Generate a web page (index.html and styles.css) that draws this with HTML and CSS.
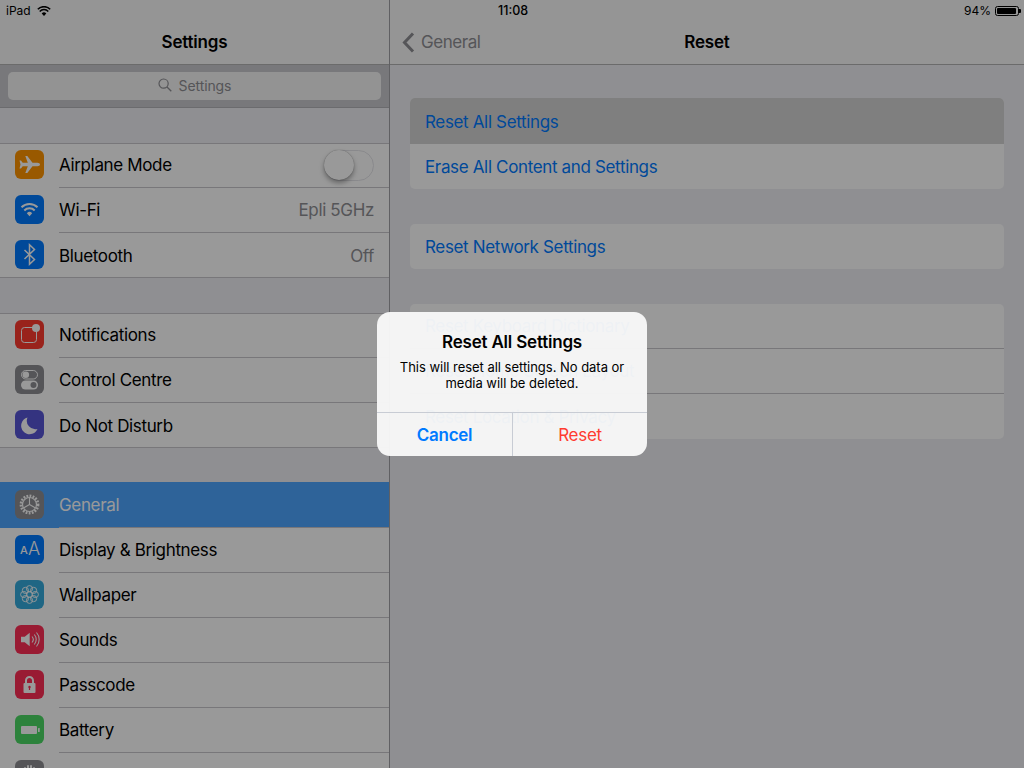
FILE: index.html
```html
<!DOCTYPE html>
<html lang="en">
<head>
<meta charset="utf-8">
<title>Settings - Reset</title>
<link rel="stylesheet" href="styles.css">
</head>
<body>
<div class="screen">
  <aside class="sidebar">
    <div class="nav">
      <div class="status status-left">
        <span>iPad</span>
        <svg class="status-wifi" viewBox="0 0 14 10"><path d="M7 10 4.700 7.400a3.300 3.300 0 0 1 4.600 0Z" fill="#000"/><path d="M2.700 5.400a6 6 0 0 1 8.600 0M.8 3.200a8.800 8.800 0 0 1 12.400 0" fill="none" stroke="#000" stroke-width="1.500"/></svg>
      </div>
      <div class="nav-title">Settings</div>
    </div>
    <div class="search-band">
      <div class="search-field">
        <svg class="search-icon" viewBox="0 0 14 14"><circle cx="5.600" cy="5.600" r="4.600" fill="none" stroke="#8e8e93" stroke-width="1.200"/><path d="m9 9 4.300 4.300" stroke="#8e8e93" stroke-width="1.300"/></svg>
        <span>Settings</span>
      </div>
    </div>

    <div class="group">
      <div class="row">
        <span class="icon orange"><svg viewBox="0 0 29 29"><path d="M25 14.500c0-1-1.200-1.700-2.500-1.700h-5L12.300 6h-2l2.500 6.800H7.700L6 10.500H4.500l1 4-1 4H6l1.700-2.300h5.100L10.300 23h2l5.200-6.800h5c1.300 0 2.500-.7 2.500-1.700Z" fill="#fff"/></svg></span>
        <div class="row-body"><span>Airplane Mode</span><span class="switch"><span class="knob"></span></span></div>
      </div>
      <div class="row">
        <span class="icon blue"><svg viewBox="0 0 29 29"><path d="m14.500 21.200-2.700-3a3.800 3.800 0 0 1 5.400 0Z" fill="#fff"/><path d="M9.300 15.500a7.300 7.300 0 0 1 10.400 0M6.500 12.300a11.300 11.300 0 0 1 16 0" fill="none" stroke="#fff" stroke-width="2"/></svg></span>
        <div class="row-body"><span>Wi-Fi</span><span class="value">Epli 5GHz</span></div>
      </div>
      <div class="row">
        <span class="icon blue"><svg viewBox="0 0 29 29"><path d="m9.500 10 10 9.500-5 4.800V4.700l5 4.800-10 9.500" fill="none" stroke="#fff" stroke-width="1.500"/></svg></span>
        <div class="row-body"><span>Bluetooth</span><span class="value">Off</span></div>
      </div>
    </div>

    <div class="group">
      <div class="row">
        <span class="icon red"><svg viewBox="0 0 29 29"><rect x="6.500" y="7.500" width="15" height="15" rx="3" fill="none" stroke="#fff" stroke-width="1"/><circle cx="21" cy="8" r="4" fill="#fff"/></svg></span>
        <div class="row-body"><span>Notifications</span></div>
      </div>
      <div class="row">
        <span class="icon grey"><svg viewBox="0 0 29 29"><rect x="6.500" y="5.500" width="16" height="8.500" rx="4.250" fill="none" stroke="#fff"/><circle cx="10.800" cy="9.700" r="3.300" fill="#fff"/><rect x="6" y="15.500" width="17" height="9" rx="4.500" fill="#fff"/><circle cx="18.500" cy="20" r="3" fill="#8e8e93"/></svg></span>
        <div class="row-body"><span>Control Centre</span></div>
      </div>
      <div class="row">
        <span class="icon indigo"><svg viewBox="0 0 29 29"><path d="M12.500 7.500a8.500 8.500 0 1 0 10 11.500 8.500 8.500 0 0 1-10-11.500Z" fill="#fff"/></svg></span>
        <div class="row-body"><span>Do Not Disturb</span></div>
      </div>
    </div>

    <div class="group">
      <div class="row selected">
        <span class="icon grey"><svg viewBox="0 0 29 29"><circle cx="14.500" cy="14.500" r="8.600" fill="none" stroke="#fff" stroke-width="2.600" stroke-dasharray="1.800 1.300"/><circle cx="14.500" cy="14.500" r="7" fill="none" stroke="#fff" stroke-width="1.200"/><path d="M14.500 14.500V8M14.500 14.500l5.600 3.200M14.500 14.500l-5.600 3.200" stroke="#fff" stroke-width="1.100"/></svg></span>
        <div class="row-body"><span>General</span></div>
      </div>
      <div class="row">
        <span class="icon blue"><svg viewBox="0 0 29 29"><text class="aa-small" x="5" y="19">A</text><text class="aa-large" x="13" y="20">A</text></svg></span>
        <div class="row-body"><span>Display &amp; Brightness</span></div>
      </div>
      <div class="row">
        <span class="icon teal"><svg viewBox="0 0 29 29"><g fill="none" stroke="#fff" stroke-width=".9"><circle cx="14.500" cy="14.500" r="2.800"/><circle cx="14.500" cy="8.700" r="3.100"/><circle cx="14.500" cy="20.300" r="3.100"/><circle cx="8.700" cy="14.500" r="3.100"/><circle cx="20.300" cy="14.500" r="3.100"/><circle cx="10.400" cy="10.400" r="3.100"/><circle cx="18.600" cy="10.400" r="3.100"/><circle cx="10.400" cy="18.600" r="3.100"/><circle cx="18.600" cy="18.600" r="3.100"/></g></svg></span>
        <div class="row-body"><span>Wallpaper</span></div>
      </div>
      <div class="row">
        <span class="icon crimson"><svg viewBox="0 0 29 29"><path d="M6 11.800h3.700l5-4v13.400l-5-4H6Z" fill="#fff"/><path d="M17 11.500a4.500 4.500 0 0 1 0 6M19.300 9.500a7.500 7.500 0 0 1 0 10M21.500 7.500a10.500 10.500 0 0 1 0 14" fill="none" stroke="#fff" stroke-width="1.100"/></svg></span>
        <div class="row-body"><span>Sounds</span></div>
      </div>
      <div class="row">
        <span class="icon crimson"><svg viewBox="0 0 29 29"><path d="M11 13.500v-3a3.500 3.500 0 0 1 7 0v3" fill="none" stroke="#fff" stroke-width="2"/><rect x="8.500" y="13" width="12" height="10" rx="1" fill="#fff"/><path d="M14.500 16.500v3.500" stroke="#ff2d55" stroke-width="1.200"/><circle cx="14.500" cy="17" r="1.200" fill="#ff2d55"/></svg></span>
        <div class="row-body"><span>Passcode</span></div>
      </div>
      <div class="row">
        <span class="icon green"><svg viewBox="0 0 29 29"><rect x="6" y="11" width="16" height="8" rx="1" fill="#fff"/><rect x="23" y="13" width="1.700" height="4" rx=".6" fill="#fff"/></svg></span>
        <div class="row-body"><span>Battery</span></div>
      </div>
      <div class="row">
        <span class="icon grey"><svg viewBox="0 0 29 29"><path d="M10 8v10M13 6v12M16 6v12M19 8v10" stroke="#fff" stroke-width="2" stroke-linecap="round"/></svg></span>
        <div class="row-body"></div>
      </div>
    </div>
  </aside>

  <main class="detail">
    <div class="nav">
      <div class="status status-detail">
        <span class="time">11:08</span>
        <span class="battery-wrap"><span>94%</span><span class="battery"><span class="battery-fill"></span></span></span>
      </div>
      <div class="nav-row">
        <div class="back">
          <svg class="chevron" viewBox="0 0 13 21"><path d="M11 1.500 2.500 10.500l8.500 9" fill="none" stroke="#8e8e93" stroke-width="3"/></svg>
          <span>General</span>
        </div>
        <div class="nav-title">Reset</div>
      </div>
    </div>
    <div class="detail-body">
      <div class="card">
        <div class="card-row pressed">Reset All Settings</div>
        <div class="card-row">Erase All Content and Settings</div>
      </div>
      <div class="card">
        <div class="card-row">Reset Network Settings</div>
      </div>
      <div class="card">
        <div class="card-row">Reset Keyboard Dictionary</div>
        <div class="card-row">Reset Home Screen Layout</div>
        <div class="card-row">Reset Location &amp; Privacy</div>
      </div>
    </div>
  </main>

  <div class="dim">
    <div class="alert">
      <div class="alert-text">
        <div class="alert-title">Reset All Settings</div>
        <div class="alert-message">This will reset all settings. No data or media will be deleted.</div>
      </div>
      <div class="alert-buttons">
        <div class="alert-button cancel">Cancel</div>
        <div class="alert-button destructive">Reset</div>
      </div>
    </div>
  </div>
</div>
</body>
</html>
```

FILE: styles.css
```css
* { box-sizing: border-box; }
html, body { margin: 0; padding: 0; }
body { font-family: Inter, "Liberation Sans", sans-serif; color: #000; }
.screen { position: relative; display: flex; width: 1024px; height: 768px; overflow: hidden; background: #efeff4; }
.sidebar { width: 390px; height: 768px; overflow: hidden; border-right: 1px solid #a0a0a5; flex: none; }
.detail { flex: 1; display: flex; flex-direction: column; }

.nav { height: 65px; background: #f8f8f8; border-bottom: 1px solid #b2b2b2; display: flex; flex-direction: column; }
.status { height: 20px; padding-top: 1px; font-size: 12px; display: flex; align-items: center; flex: none; }
.status-left { padding-left: 6px; gap: 6px; }
.status-wifi { width: 14px; height: 10px; }
.nav-title { font-size: 17px; font-weight: 600; letter-spacing: -.2px; text-align: center; line-height: 44px; }
.status-detail { position: relative; justify-content: flex-end; padding-right: 5px; }
.time { position: absolute; left: 108px; font-weight: 500; font-size: 12.500px; }
.battery-wrap { display: flex; align-items: center; gap: 4px; }
.battery { width: 24px; height: 10px; border: 1px solid #000; border-radius: 2.500px; padding: 1px; position: relative; }
.battery::after { content: ""; position: absolute; left: 23px; top: 2px; width: 2px; height: 4px; background: #000; border-radius: 0 1px 1px 0; }
.battery-fill { display: block; width: 94%; height: 100%; background: #000; border-radius: 1px; }
.nav-row { position: relative; height: 44px; }
.back { position: absolute; left: 12px; top: 0; height: 44px; display: flex; align-items: center; gap: 6px; font-size: 17px; letter-spacing: -.45px; color: #8e8e93; }
.chevron { width: 13px; height: 21px; }

.search-band { height: 43px; background: #c9c9ce; border-bottom: 1px solid #b2b2b7; padding: 7px 8px 0; }
.search-field { height: 28px; padding-bottom: 2px; background: #f5f5f5; border-radius: 5px; display: flex; align-items: center; justify-content: center; gap: 7px; font-size: 14px; letter-spacing: -.1px; color: #8e8e93; }
.search-icon { width: 14px; height: 14px; }

.group { margin-top: 35px; background: #fff; box-shadow: inset 0 1px 0 #c8c7cc, inset 0 -1px 0 #c8c7cc; }
.row { display: flex; height: 45px; padding-left: 15px; font-size: 17px; letter-spacing: -.35px; }
.icon { width: 29px; height: 29px; border-radius: 6px; margin-top: 7px; flex: none; display: block; }
.icon svg { display: block; width: 29px; height: 29px; }
.row-body { flex: 1; min-width: 0; margin-left: 15px; height: 45px; border-bottom: 1px solid #c8c7cc; padding: 0 15px 0 0; display: flex; align-items: center; justify-content: space-between; }
.row:last-child .row-body { border-bottom: 0; }
.value { color: #8e8e93; }
.selected { background: #4ea6ff; box-shadow: 0 -1px 0 #4ea6ff; color: #fff; }
.orange { background: #ff9500; }
.blue { background: #007aff; }
.red { background: #ff3b30; }
.grey { background: #8e8e93; }
.indigo { background: #5856d6; }
.teal { background: #34aadc; }
.crimson { background: #ff2d55; }
.green { background: #4cd964; }
.aa-small { font: 500 11px Inter, sans-serif; fill: #fff; }
.aa-large { font: 300 18px Inter, sans-serif; fill: #fff; }

.switch { width: 50px; height: 31px; border-radius: 16px; background: #fff; border: 1.500px solid #e5e5ea; position: relative; }
.knob { position: absolute; left: -1px; top: -1px; width: 30px; height: 30px; border-radius: 50%; background: #fff; box-shadow: 0 3px 5px rgba(0,0,0,.35), 0 0 1px rgba(0,0,0,.4); }

.detail-body { padding: 33px 20px 0; display: flex; flex-direction: column; gap: 35px; }
.card { background: #fff; border-radius: 5px; overflow: hidden; }
.card-row { height: 45px; padding: 0 15px; display: flex; align-items: center; font-size: 17px; letter-spacing: -.35px; color: #007aff; border-bottom: 1px solid #c8c7cc; }
.card-row:last-child { border-bottom: 0; }
.pressed { height: 46px; background: #d4d4d4; border-bottom: 0; padding-top: 1px; }

.dim { position: absolute; inset: 0; background: rgba(0,0,0,.4); display: flex; align-items: center; justify-content: center; }
.alert { width: 270px; height: 144px; background: rgba(248,248,248,.96); border-radius: 13px; display: flex; flex-direction: column; overflow: hidden; }
.alert-text { height: 101px; border-bottom: 1px solid #c8ccd4; padding: 20px 16px 0; text-align: center; }
.alert-title { font-size: 17px; font-weight: 600; line-height: 21px; letter-spacing: -.2px; }
.alert-message { font-size: 13px; line-height: 16px; margin-top: 6px; letter-spacing: -.03px; }
.alert-buttons { flex: 1; display: grid; grid-template-columns: 136px 1fr; }
.alert-button { display: flex; align-items: center; justify-content: center; padding-top: 1px; font-size: 17px; letter-spacing: -.3px; }
.cancel { color: #007aff; font-weight: 600; border-right: 1px solid #c8ccd4; }
.destructive { color: #ff3b30; }
```
